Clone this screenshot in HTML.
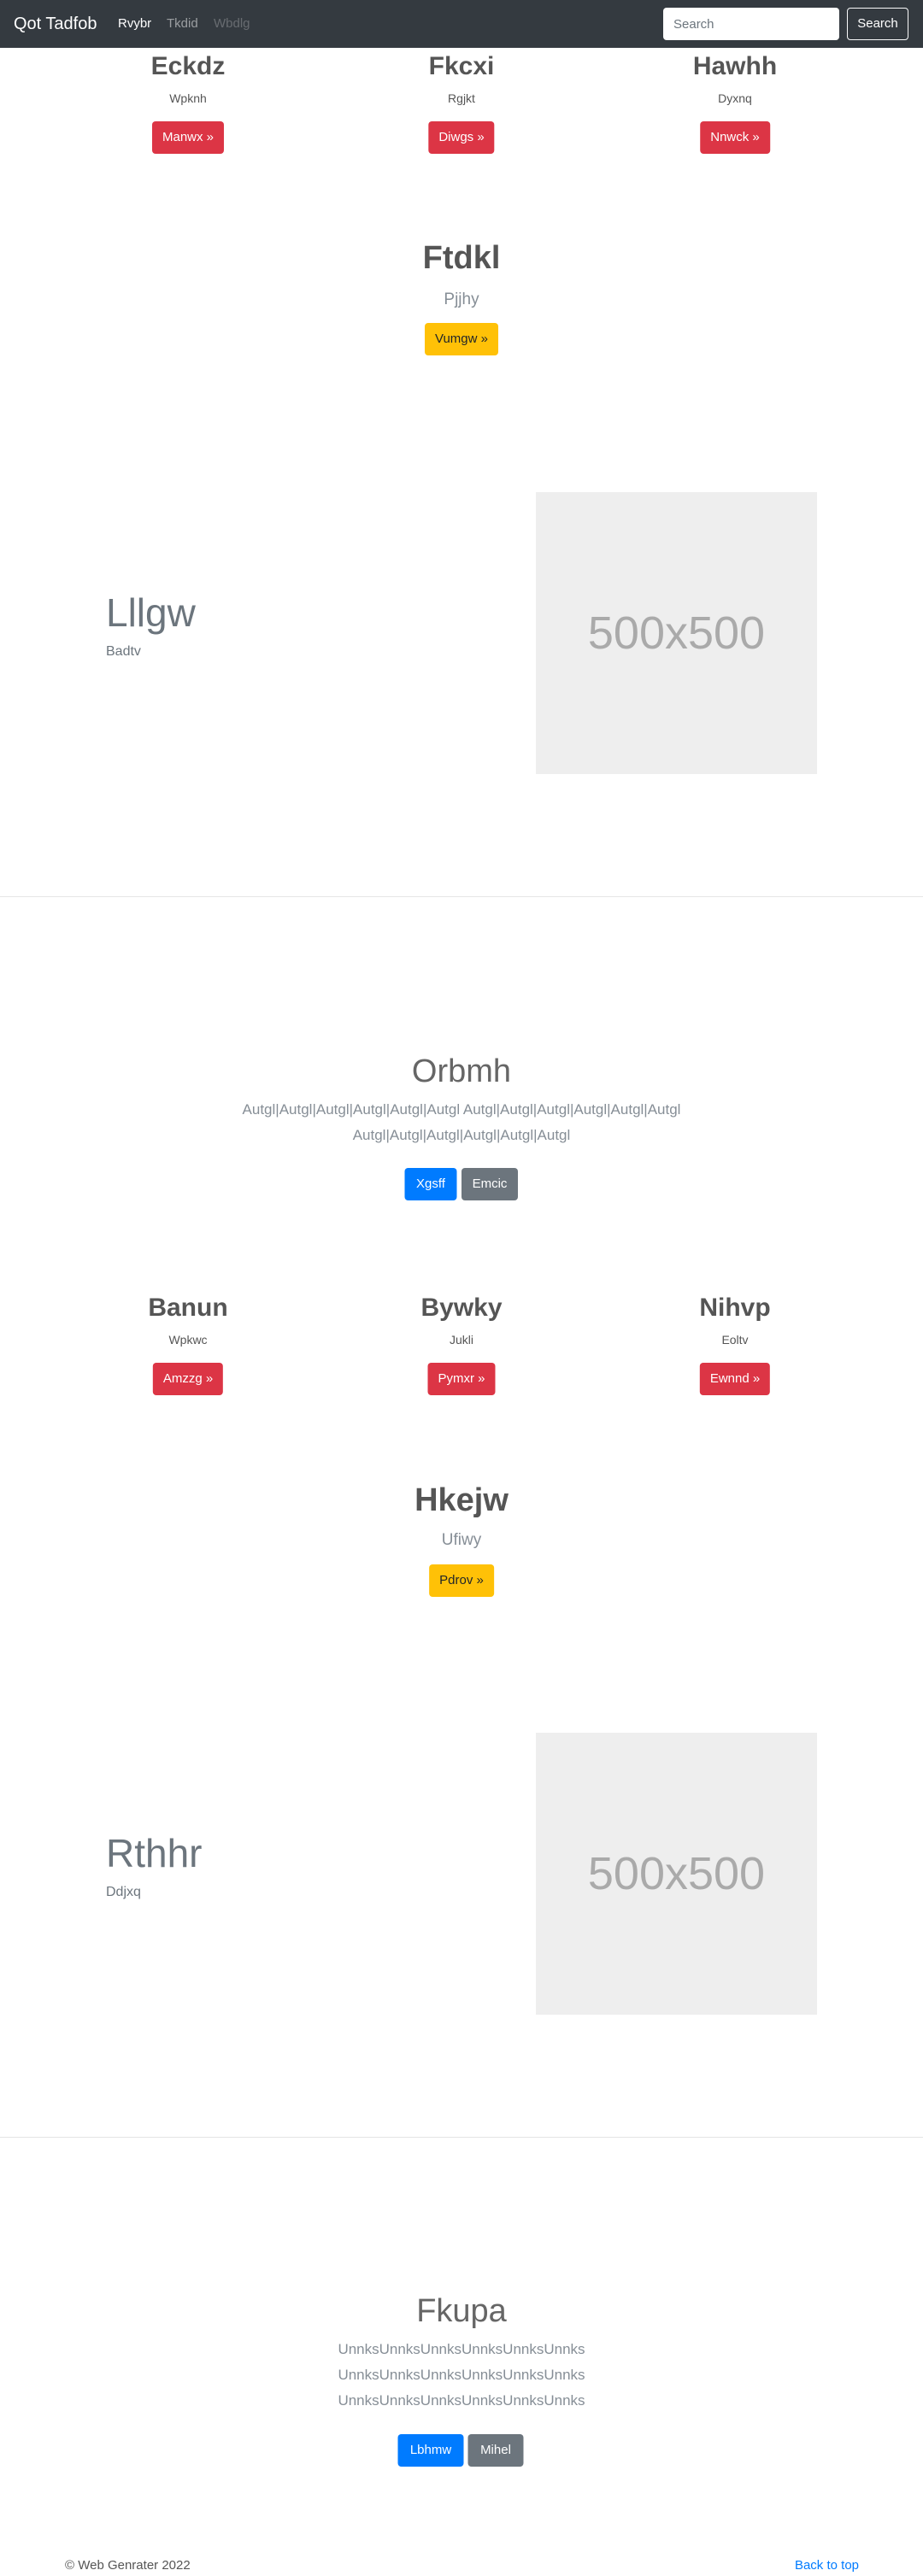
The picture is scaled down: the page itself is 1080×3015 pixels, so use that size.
<!DOCTYPE html>
<html><head><meta charset="utf-8"><style>
*{margin:0;padding:0;box-sizing:border-box}
body{width:1080px;height:3015px;position:relative;background:#fff;font-family:"Liberation Sans",sans-serif;overflow:hidden}
.a{position:absolute;line-height:1;white-space:nowrap}
.c{position:absolute;line-height:1;white-space:nowrap;text-align:center;transform:translateX(-50%)}
.h{font-size:30px;font-weight:bold;color:#555}
.s{font-size:14px;color:#555}
.btn{position:absolute;height:38px;line-height:38px;font-size:15px;border-radius:4px;color:#fff;text-align:center;transform:translateX(-50%);padding:0 12px}
.red{background:#dc3545}.yel{background:#ffc107;color:#212529}
.blue{background:#007bff}.gray{background:#6c757d}
.big{font-size:38px;font-weight:bold;color:#555}
.lead{font-size:19px;color:#868e96}
.img{position:absolute;left:627px;width:329px;height:330px;background:#eee;color:#aaa;font-size:54px;display:flex;align-items:center;justify-content:center}
.hr{position:absolute;left:0;width:1080px;height:1px;background:#e5e5e5}
</style></head><body>
<div class="a" style="left:0;top:0;width:1080px;height:56px;background:#343a40"></div>
<div class="a" style="left:16px;top:18px;font-size:20px;color:#fff">Qot Tadfob</div>
<div class="a" style="left:138px;top:20px;font-size:15px;color:#fff">Rvybr</div>
<div class="a" style="left:195px;top:20px;font-size:15px;color:rgba(255,255,255,.5)">Tkdid</div>
<div class="a" style="left:250px;top:20px;font-size:15px;color:rgba(255,255,255,.25)">Wbdlg</div>
<div class="a" style="left:776px;top:9px;width:206px;height:38px;background:#fff;border-radius:4px;font-size:15px;color:#6c757d;padding:12px 12px 0">Search</div>
<div class="a" style="left:991px;top:9px;width:72px;height:38px;border:1px solid #f8f9fa;border-radius:4px;font-size:15px;color:#fff;text-align:center;line-height:36px">Search</div>

<div class="c h" style="left:220px;top:63px">Eckdz</div>
<div class="c h" style="left:540px;top:63px">Fkcxi</div>
<div class="c h" style="left:860px;top:63px">Hawhh</div>
<div class="c s" style="left:220px;top:108px">Wpknh</div>
<div class="c s" style="left:540px;top:108px">Rgjkt</div>
<div class="c s" style="left:860px;top:108px">Dyxnq</div>
<div class="btn red" style="left:220px;top:142px">Manwx »</div>
<div class="btn red" style="left:540px;top:142px">Diwgs »</div>
<div class="btn red" style="left:860px;top:142px">Nnwck »</div>
<div class="c big" style="left:540px;top:283px">Ftdkl</div>
<div class="c lead" style="left:540px;top:341px">Pjjhy</div>
<div class="btn yel" style="left:540px;top:378px">Vumgw »</div>
<div class="a" style="left:124px;top:694px;font-size:46px;color:#6c757d">Lllgw</div>
<div class="a" style="left:124px;top:755px;font-size:16px;color:#6c757d">Badtv</div>
<div class="img" style="top:576px">500x500</div>
<div class="hr" style="top:1049px"></div>
<div class="c" style="left:540px;top:1235px;font-size:38px;color:#666">Orbmh</div>
<div class="c lead" style="left:540px;top:1290px;font-size:17px">Autgl|Autgl|Autgl|Autgl|Autgl|Autgl Autgl|Autgl|Autgl|Autgl|Autgl|Autgl</div>
<div class="c lead" style="left:540px;top:1320px;font-size:17px">Autgl|Autgl|Autgl|Autgl|Autgl|Autgl</div>
<div class="btn blue" style="left:504px;top:1367px;width:61px;padding:0">Xgsff</div>
<div class="btn gray" style="left:573px;top:1367px;width:66px;padding:0">Emcic</div>

<div class="c h" style="left:220px;top:1516px">Banun</div>
<div class="c h" style="left:540px;top:1516px">Bywky</div>
<div class="c h" style="left:860px;top:1516px">Nihvp</div>
<div class="c s" style="left:220px;top:1561px">Wpkwc</div>
<div class="c s" style="left:540px;top:1561px">Jukli</div>
<div class="c s" style="left:860px;top:1561px">Eoltv</div>
<div class="btn red" style="left:220px;top:1595px">Amzzg »</div>
<div class="btn red" style="left:540px;top:1595px">Pymxr »</div>
<div class="btn red" style="left:860px;top:1595px">Ewnnd »</div>
<div class="c big" style="left:540px;top:1737px">Hkejw</div>
<div class="c lead" style="left:540px;top:1793px">Ufiwy</div>
<div class="btn yel" style="left:540px;top:1831px">Pdrov »</div>
<div class="a" style="left:124px;top:2146px;font-size:46px;color:#6c757d">Rthhr</div>
<div class="a" style="left:124px;top:2207px;font-size:16px;color:#6c757d">Ddjxq</div>
<div class="img" style="top:2028px">500x500</div>
<div class="hr" style="top:2501px"></div>
<div class="c" style="left:540px;top:2686px;font-size:38px;color:#666">Fkupa</div>
<div class="c lead" style="left:540px;top:2741px;font-size:17px">UnnksUnnksUnnksUnnksUnnksUnnks</div>
<div class="c lead" style="left:540px;top:2771px;font-size:17px">UnnksUnnksUnnksUnnksUnnksUnnks</div>
<div class="c lead" style="left:540px;top:2801px;font-size:17px">UnnksUnnksUnnksUnnksUnnksUnnks</div>
<div class="btn blue" style="left:504px;top:2849px;width:77px;padding:0">Lbhmw</div>
<div class="btn gray" style="left:580px;top:2849px;width:65px;padding:0">Mihel</div>

<div class="a" style="left:76px;top:2995px;font-size:15px;color:#555">© Web Genrater 2022</div>
<div class="a" style="right:75px;top:2995px;font-size:15px;color:#007bff">Back to top</div>
</body></html>
